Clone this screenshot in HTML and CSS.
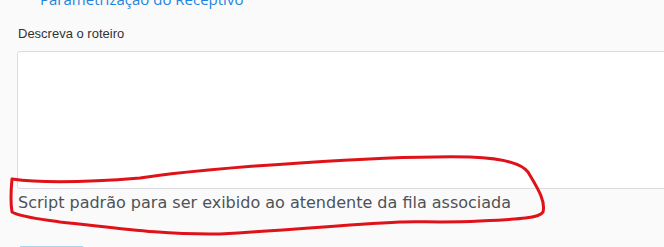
FILE: index.html
```html
<!DOCTYPE html>
<html lang="pt">
<head>
<meta charset="utf-8">
<link rel="stylesheet" href="styles.css">
</head>
<body>
<div class="page">
  <a class="crumb" href="#">Parametrização do Receptivo</a>
  <div class="field">
    <label class="label" for="roteiro">Descreva o roteiro</label>
    <textarea id="roteiro" class="textarea"></textarea>
    <p class="help">Script padrão para ser exibido ao atendente da fila associada</p>
  </div>
  <div class="actions"><span class="btn"></span></div>
</div>
<svg class="mark" width="664" height="247" viewBox="0 0 664 247">
  <path d="M12 179 C40 183 90 182 140 178 C180 172 220 168 300 163 C360 159 420 156 470 157 C500 158 520 162 528 172 C536 186 546 200 543 212 C540 218 520 219 480 221 C440 223 420 221 400 222 C340 225 290 230 220 234 C160 235 110 227 60 222 C40 219 20 217 12 212 C10 200 11 190 12 179"/>
</svg>
</body>
</html>
```
FILE: styles.css
```css
html, body {
  margin: 0;
  padding: 0;
  background: #fafafa;
}
body {
  width: 664px;
  height: 247px;
  overflow: hidden;
  position: relative;
}
.page {
  display: flex;
  flex-direction: column;
  padding-left: 17px;
}
.crumb {
  display: block;
  margin-top: -11px;
  margin-left: 23px;
  font-family: "Open Sans", sans-serif;
  font-size: 15px;
  line-height: 20px;
  color: #1f84dc;
  text-decoration: none;
}
.field {
  display: flex;
  flex-direction: column;
  margin-top: 17px;
}
.label {
  font-family: "Liberation Sans", Arial, sans-serif;
  font-size: 13px;
  line-height: 15px;
  color: #333;
  padding-left: 1px;
  margin-bottom: 10px;
}
.textarea {
  width: 700px;
  height: 138px;
  box-sizing: border-box;
  border: 1px solid #dcdce0;
  border-radius: 3px;
  background: #fff;
  resize: none;
  margin: 0;
}
.help {
  margin: 0;
  margin-top: 4px;
  padding-left: 1px;
  font-family: "DejaVu Sans", Verdana, sans-serif;
  font-size: 16px;
  line-height: 20px;
  color: #4d5258;
}
.actions {
  display: flex;
  margin-top: 33px;
}
.btn {
  display: block;
  margin-left: 3px;
  width: 63px;
  height: 20px;
  border-top: 2px solid #a8d8ea;
}
.mark {
  position: absolute;
  left: 0;
  top: 0;
  pointer-events: none;
}
.mark path {
  fill: none;
  stroke: #e01219;
  stroke-width: 3;
  stroke-linecap: round;
  stroke-linejoin: round;
}
```
